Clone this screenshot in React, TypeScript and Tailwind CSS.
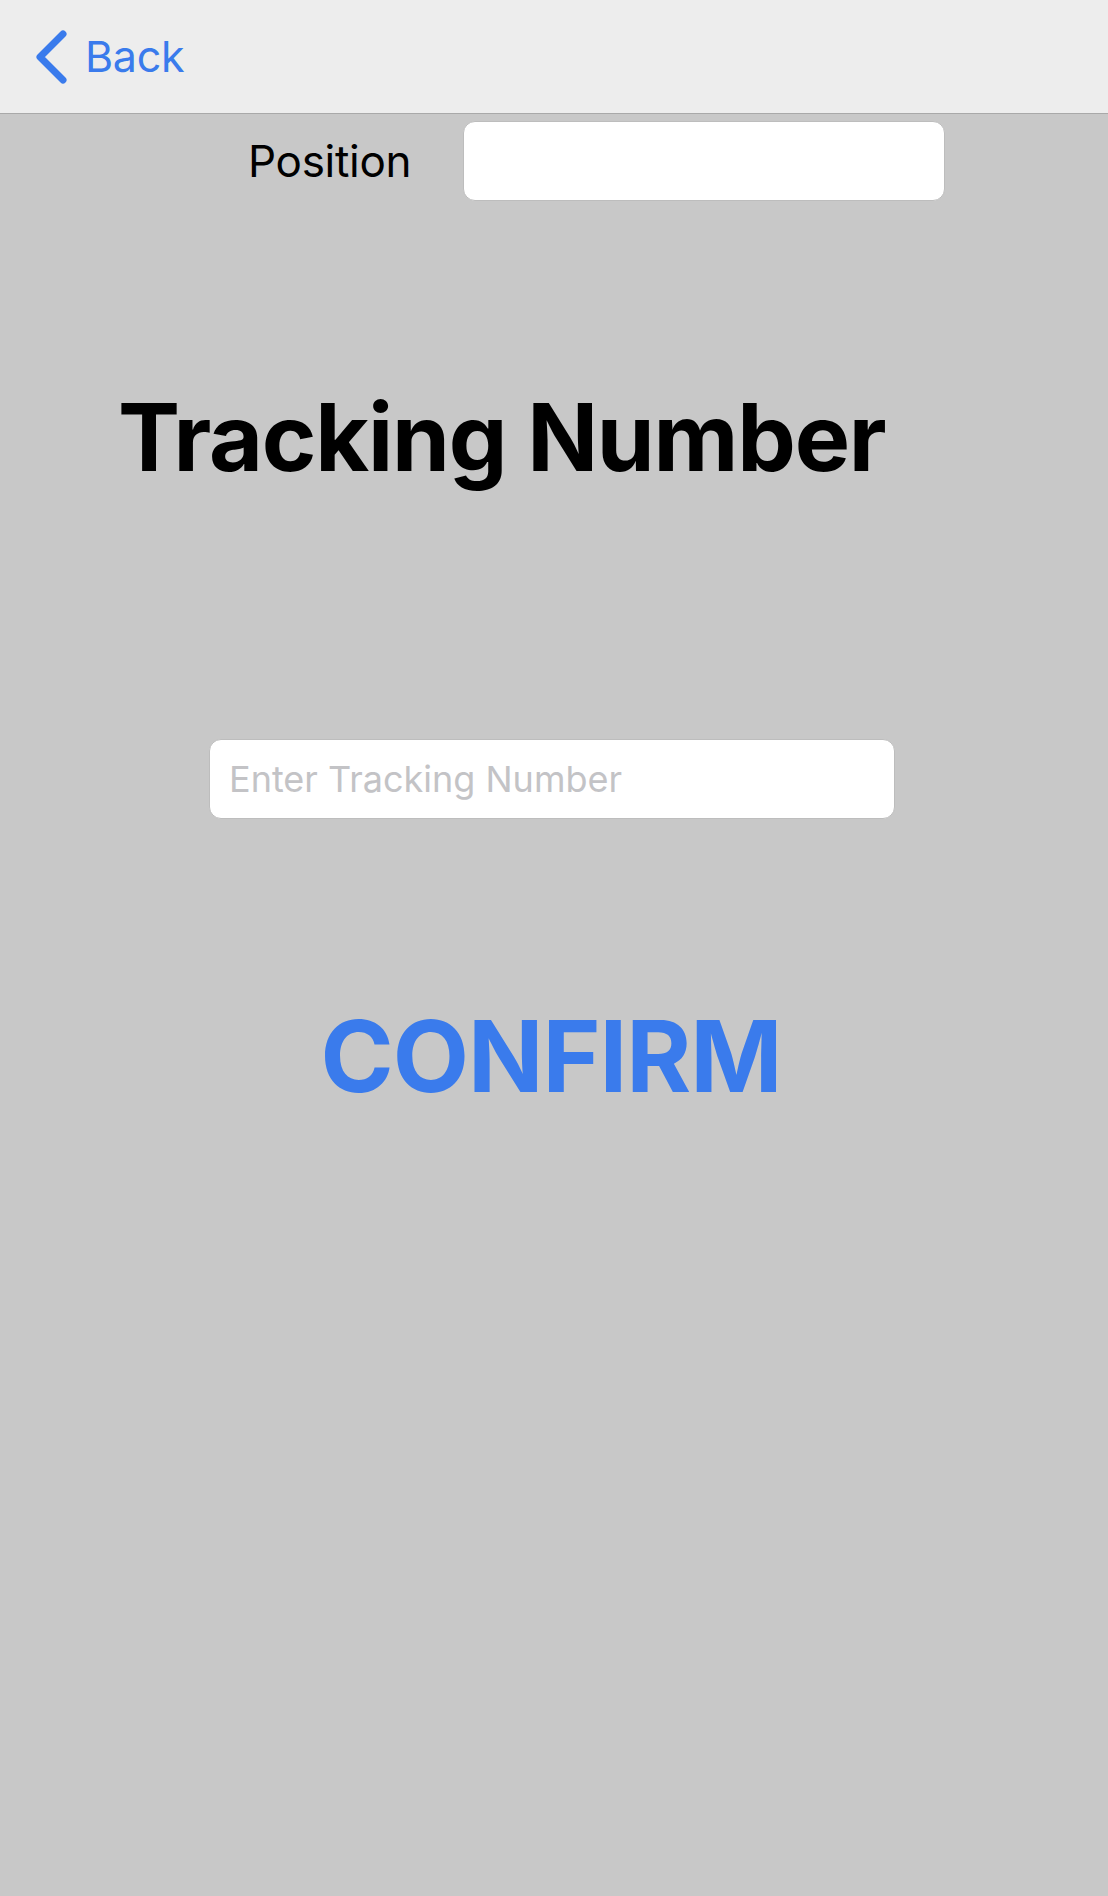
import React from "react";

export default function App() {
  return (
    <div
      className="w-[1108px] h-[1896px] bg-[#c8c8c8] flex flex-col"
      style={{ fontFamily: "Inter, 'Noto Sans', sans-serif" }}
    >
      <header className="h-[114px] shrink-0 bg-[#ededed] border-b border-[#a9a9a9] flex items-center pl-[34px]">
        <button className="flex items-center gap-[17px] text-[#3a7bec]">
          <svg width="34" height="56" viewBox="0 0 34 56" fill="none">
            <path
              d="M29 5 L6 28 L29 51"
              stroke="#3a7bec"
              strokeWidth="7"
              strokeLinecap="round"
              strokeLinejoin="round"
            />
          </svg>
          <span className="text-[43px] leading-none tracking-[-0.3px]">Back</span>
        </button>
      </header>

      <div className="flex items-center mt-[7px]">
        <span className="ml-[248px] text-[44px] leading-none text-black tracking-[-0.3px]">Position</span>
        <input
          className="ml-[52px] w-[482px] h-[80px] bg-white rounded-[12px] border border-[#bdbdbd] outline-none px-4 text-[36px]"
          type="text"
        />
      </div>

      <h1 className="mt-[190px] ml-[118px] text-[93px] leading-none font-bold text-black tracking-[-1.2px]">
        Tracking Number
      </h1>

      <input
        className="mt-[255px] ml-[209px] w-[686px] h-[80px] bg-white rounded-[12px] border border-[#bdbdbd] outline-none pl-[19px] text-[36px] placeholder:text-[#c3c3c6]"
        style={{ fontFamily: "Inter, 'Noto Sans', sans-serif" }}
        placeholder="Enter Tracking Number"
        type="text"
      />

      <button className="mt-[188px] self-center ml-[-6px] text-[99px] leading-none font-bold text-[#3a7bec] tracking-[-1px]">
        CONFIRM
      </button>
    </div>
  );
}
